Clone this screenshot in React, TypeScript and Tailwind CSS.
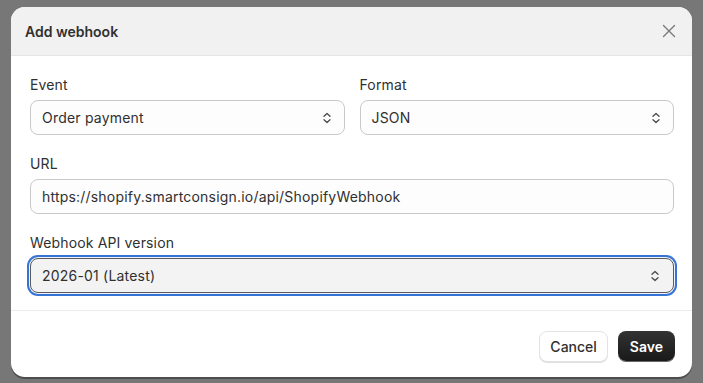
import React from "react";

function Chevrons() {
  return (
    <svg width="10" height="14" viewBox="0 0 10 14" fill="none" className="shrink-0">
      <path d="M2 5.2 5 2.4 8 5.2" stroke="#4a4a4a" strokeWidth="1.3" strokeLinecap="round" strokeLinejoin="round" />
      <path d="M2 8.8 5 11.6 8 8.8" stroke="#4a4a4a" strokeWidth="1.3" strokeLinecap="round" strokeLinejoin="round" />
    </svg>
  );
}

function Field({ label, children }: { label: string; children: React.ReactNode }) {
  return (
    <div className="flex flex-col gap-[5px]">
      <span className="text-[14px] leading-[20px] tracking-[0.15px] text-[#303030]">{label}</span>
      {children}
    </div>
  );
}

function SelectBox({ value, focused = false }: { value: string; focused?: boolean }) {
  if (focused) {
    return (
      <div className="flex h-[35px] items-center justify-between rounded-[8px] border-[1.5px] border-[#5a5a5a] bg-[#f3f3f3] pl-[11px] pr-[13px] text-[14px] tracking-[0.2px] text-[#303030] shadow-[0_0_0_1px_#eef2fa,0_0_0_3px_#3574d4]">
        <span>{value}</span>
        <Chevrons />
      </div>
    );
  }
  return (
    <div className="flex h-[35px] items-center justify-between rounded-[8px] border border-[#c9c9c9] bg-[#fdfdfd] pl-[11px] pr-[12px] text-[14px] tracking-[0.2px] text-[#303030]">
      <span>{value}</span>
      <Chevrons />
    </div>
  );
}

export default function App() {
  return (
    <div
      className="h-[383px] w-[703px] overflow-hidden bg-[#777777] pl-[11px] pt-[7px]"
      style={{ fontFamily: "Inter, 'Noto Sans', sans-serif" }}
    >
      <div className="flex h-[370px] w-[681px] flex-col overflow-hidden rounded-[14px] bg-white shadow-[0_2px_0_rgba(0,0,0,0.35)]">
        <div className="flex h-[49px] shrink-0 items-center justify-between border-b border-[#e6e6e6] bg-[#f1f1f1] pl-[14px] pr-[16px]">
          <h2 className="text-[14px] font-semibold text-[#303030]">Add webhook</h2>
          <svg width="14" height="14" viewBox="0 0 14 14" fill="none">
            <path d="M1.5 1.5 12.5 12.5M12.5 1.5 1.5 12.5" stroke="#7a7a7a" strokeWidth="1.4" strokeLinecap="round" />
          </svg>
        </div>

        <div className="flex flex-col gap-[18px] border-b border-[#ececec] pb-[17px] pl-[19px] pr-[18px] pt-[19px]">
          <div className="grid grid-cols-2 gap-[15px]">
            <Field label="Event">
              <SelectBox value="Order payment" />
            </Field>
            <Field label="Format">
              <SelectBox value="JSON" />
            </Field>
          </div>
          <div className="mt-[1px]">
            <Field label="URL">
              <div className="flex h-[35px] items-center rounded-[8px] border border-[#c9c9c9] bg-[#fdfdfd] px-[11px] text-[14px] tracking-[0.2px] text-[#303030]">
                https://shopify.smartconsign.io/api/ShopifyWebhook
              </div>
            </Field>
          </div>
          <div className="mt-[1px]">
            <Field label="Webhook API version">
              <SelectBox value="2026-01 (Latest)" focused />
            </Field>
          </div>
        </div>

        <div className="flex justify-end gap-[10px] pr-[17px] pt-[20px]">
          <button
            type="button"
            className="h-[31px] rounded-[8px] border border-[#e3e3e3] bg-white px-[10px] text-[14px] font-medium text-[#303030] shadow-[0_1px_0_rgba(0,0,0,0.12)]"
          >
            Cancel
          </button>
          <button
            type="button"
            className="h-[30px] rounded-[8px] bg-gradient-to-b from-[#333333] to-[#1a1a1a] px-[12px] text-[14px] font-semibold text-white shadow-[0_1px_0_rgba(0,0,0,0.6)]"
          >
            Save
          </button>
        </div>
      </div>
    </div>
  );
}
